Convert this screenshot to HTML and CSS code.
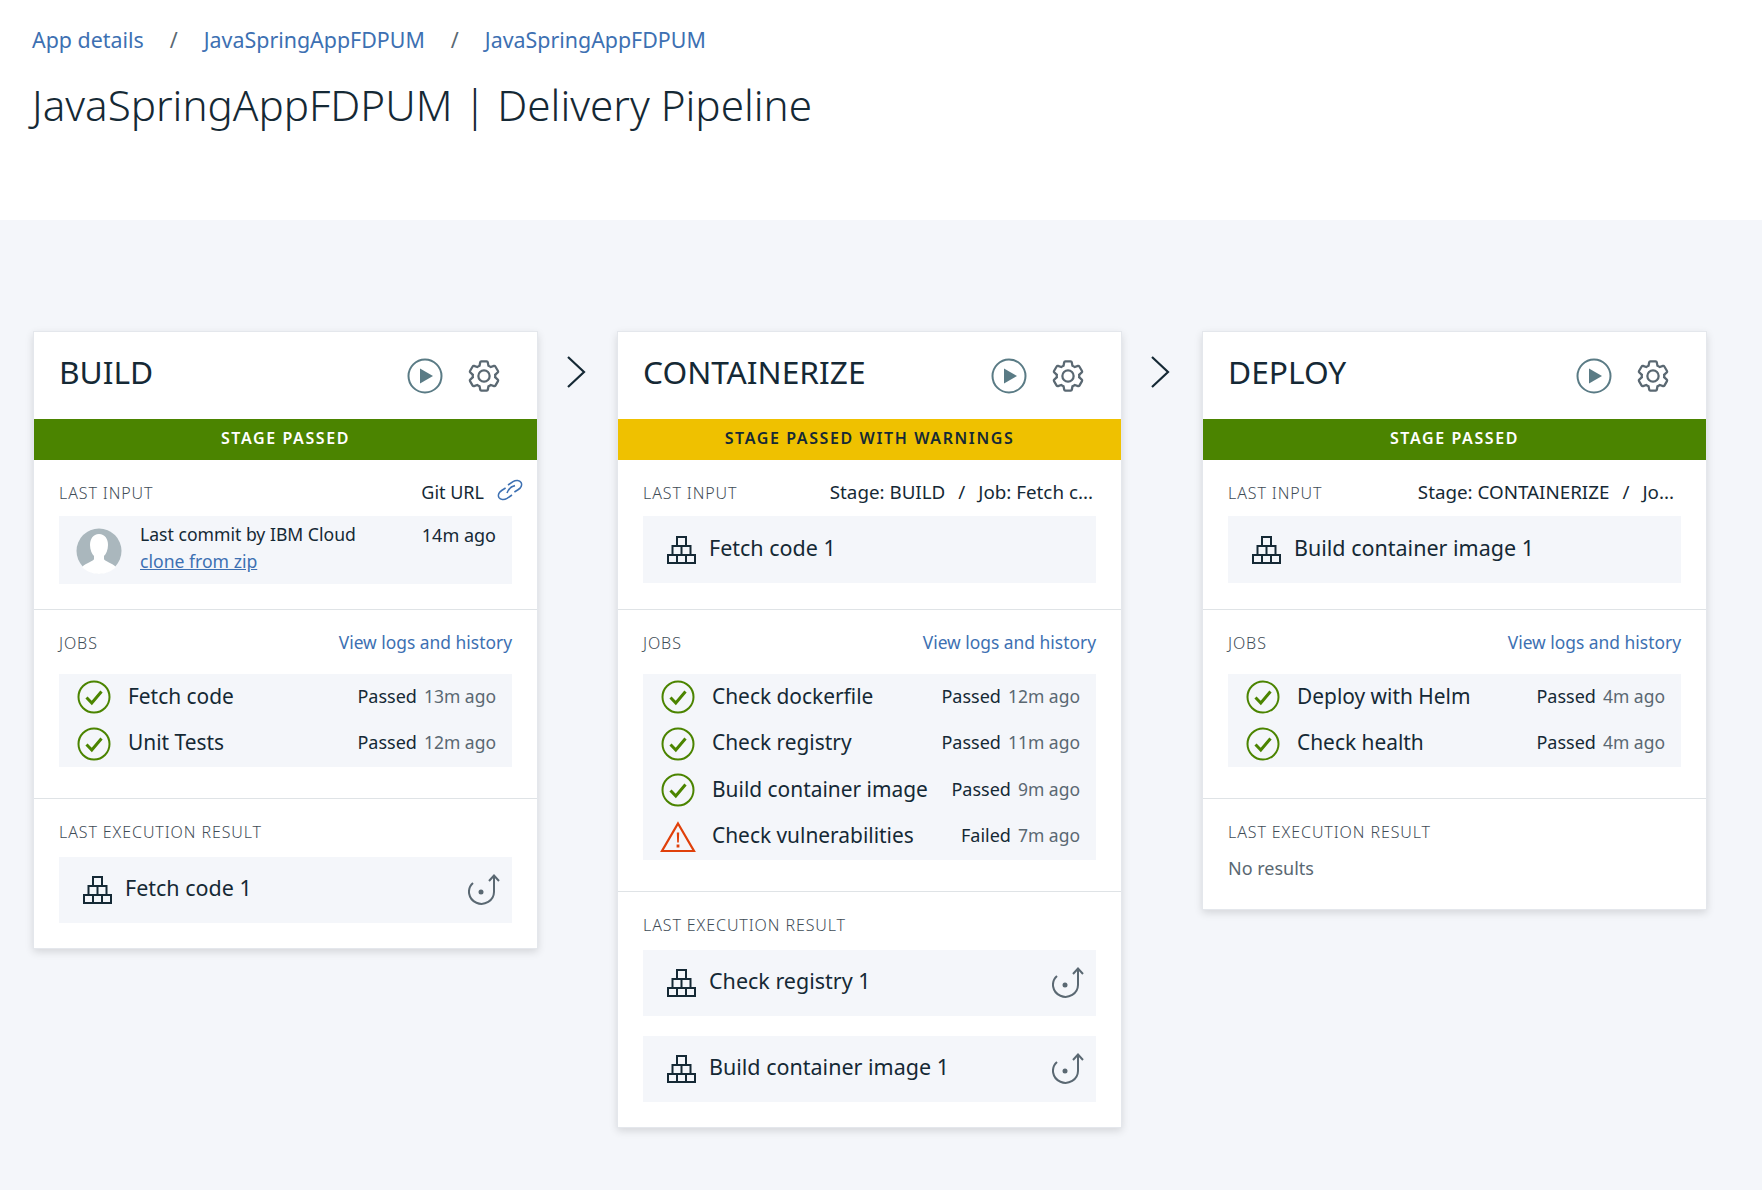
FILE: index.html
```html
<!DOCTYPE html>
<html lang="en">
<head>
    <meta charset="UTF-8">
    <title>JavaSpringAppFDPUM | Delivery Pipeline</title>
    <link rel="stylesheet" href="styles.css">
</head>
<body>

<svg class="defs" width="0" height="0">
    <symbol id="i-play" viewBox="0 0 36 36">
        <circle cx="18" cy="18" r="16.5" fill="none" stroke="#5a7b85" stroke-width="2"/>
        <path d="M13 10.5 L26 18 L13 25.5 Z" fill="#5a7b85"/>
    </symbol>
    <symbol id="i-gear" viewBox="0 0 32 32">
        <path fill="#5a6872" d="M27,16.76c0-.25,0-.5,0-.76s0-.51,0-.77l1.92-1.68A2,2,0,0,0,29.3,11L26.94,7a2,2,0,0,0-1.73-1,2,2,0,0,0-.64.1l-2.43.82a11.35,11.35,0,0,0-1.31-.75l-.51-2.52a2,2,0,0,0-2-1.61H13.64a2,2,0,0,0-2,1.61l-.51,2.52a11.48,11.48,0,0,0-1.32.75L7.43,6.06A2,2,0,0,0,6.79,6,2,2,0,0,0,5.06,7L2.7,11a2,2,0,0,0,.41,2.51L5,15.24c0,.25,0,.5,0,.76s0,.51,0,.77L3.11,18.45A2,2,0,0,0,2.7,21L5.06,25a2,2,0,0,0,1.73,1,2,2,0,0,0,.64-.1l2.43-.82a11.35,11.35,0,0,0,1.31.75l.51,2.52a2,2,0,0,0,2,1.61h4.72a2,2,0,0,0,2-1.61l.51-2.52a11.48,11.48,0,0,0,1.32-.75l2.42.82a2,2,0,0,0,.64.1,2,2,0,0,0,1.73-1L29.3,21a2,2,0,0,0-.41-2.51ZM25.21,24l-3.43-1.16a8.86,8.86,0,0,1-2.71,1.57L18.36,28H13.64l-.71-3.55a9.36,9.36,0,0,1-2.7-1.57L6.79,24,4.43,20l2.72-2.4a8.9,8.9,0,0,1,0-3.13L4.43,12,6.79,8l3.43,1.16a8.86,8.86,0,0,1,2.71-1.57L13.64,4h4.72l.71,3.55a9.36,9.36,0,0,1,2.7,1.57L25.21,8,27.57,12l-2.72,2.4a8.9,8.9,0,0,1,0,3.13L27.57,20Z"/>
        <path fill="#5a6872" d="M16,22a6,6,0,1,1,6-6A5.94,5.94,0,0,1,16,22Zm0-10a3.91,3.91,0,0,0-4,4,3.91,3.91,0,0,0,4,4,3.91,3.91,0,0,0,4-4A3.91,3.91,0,0,0,16,12Z"/>
    </symbol>
    <symbol id="i-chevron" viewBox="0 0 20 34">
        <path d="M2 2 L18 17 L2 32" fill="none" stroke="#152935" stroke-width="2.2"/>
    </symbol>
    <symbol id="i-link" viewBox="0 0 26 22">
        <g fill="none" stroke="#3d70b2" stroke-width="1.6">
            <path d="M11 6 L16 2.6 C19 .8 22.6 1.2 24 3.4 C25.4 5.8 24 9 21 10.8 L17.4 13"/>
            <path d="M15 16 L10 19.4 C7 21.2 3.4 20.8 2 18.6 C.6 16.2 2 13 5 11.2 L8.6 9"/>
            <path d="M10 14 C11.6 9.6 14.4 7.4 18 6.6"/>
        </g>
    </symbol>
    <symbol id="i-check" viewBox="0 0 34 34">
        <circle cx="17" cy="17" r="15.5" fill="none" stroke="#4b8400" stroke-width="2"/>
        <path d="M9.5 17.5 L14.8 23 L24.5 11.5" fill="none" stroke="#4b8400" stroke-width="3"/>
    </symbol>
    <symbol id="i-warn" viewBox="0 0 36 32">
        <path d="M18 2.5 L34 30 H2 Z" fill="none" stroke="#e0400a" stroke-width="2.2"/>
        <path d="M16.8 11.5 h2.4 l-.4 10 h-1.6 Z M16.6 23.5 h2.8 v3 h-2.8 Z" fill="#e0400a"/>
    </symbol>
    <symbol id="i-stack" viewBox="0 0 29 28">
        <path d="M1 19 H28 V27 H1 Z M10 19 V27 M19 19 V27 M5.500 10 H23.500 V19 H5.500 Z M14.500 10 V19 M10 1 H19 V10 H10 Z" fill="none" stroke="#152935" stroke-width="2"/>
    </symbol>
    <symbol id="i-rerun" viewBox="0 0 32 32">
        <g fill="none" stroke="#5a6872" stroke-width="2">
            <path d="M21 7 L26 1.500 L31 7"/>
            <path d="M26 2 V18 A12.500 12 0 1 1 5 9"/>
        </g>
        <circle cx="13" cy="18" r="2.500" fill="#5a6872"/>
    </symbol>
    <symbol id="i-user" viewBox="0 0 46 46">
        <circle cx="23" cy="23" r="22.500" fill="#aab7bd"/>
        <path d="M23 6 C29 6 32 11 32 17 C32 22 30 26 28 28 V31 C28 33 36 35 40 39 C36 43 30 46 23 46 C16 46 10 43 6 39 C10 35 18 33 18 31 V28 C16 26 14 22 14 17 C14 11 17 6 23 6 Z" fill="#fff"/>
    </symbol>
</svg>

<header class="page-header">
    <nav class="crumbs">
        <a href="#">App details</a><span class="sep">/</span>
        <a href="#">JavaSpringAppFDPUM</a><span class="sep">/</span>
        <a href="#">JavaSpringAppFDPUM</a>
    </nav>
    <h1 class="page-title">JavaSpringAppFDPUM | Delivery Pipeline</h1>
</header>

<main class="pipeline">

    <section class="stage">
        <div class="stage-head">
            <h2>BUILD</h2>
            <svg class="ico-play"><use href="#i-play"/></svg>
            <svg class="ico-gear"><use href="#i-gear"/></svg>
        </div>
        <div class="status ok">STAGE PASSED</div>
        <div class="block block-input">
            <div class="block-head">
                <span class="label">LAST INPUT</span>
                <span class="input-val">Git URL<svg class="ico-link"><use href="#i-link"/></svg></span>
            </div>
            <div class="box commit">
                <svg class="ico-user"><use href="#i-user"/></svg>
                <div class="commit-text">
                    <div>Last commit by IBM Cloud</div>
                    <a href="#">clone from zip</a>
                </div>
                <span class="commit-time">14m ago</span>
            </div>
        </div>
        <div class="block block-jobs">
            <div class="block-head">
                <span class="label">JOBS</span>
                <a class="logs" href="#">View logs and history</a>
            </div>
            <div class="box jobs">
                <div class="job"><svg class="ico-job"><use href="#i-check"/></svg><span class="job-name">Fetch code</span><span class="job-state">Passed</span><span class="job-time">13m ago</span></div>
                <div class="job"><svg class="ico-job"><use href="#i-check"/></svg><span class="job-name">Unit Tests</span><span class="job-state">Passed</span><span class="job-time">12m ago</span></div>
            </div>
        </div>
        <div class="block block-result">
            <div class="block-head">
                <span class="label">LAST EXECUTION RESULT</span>
            </div>
            <div class="box result">
                <svg class="ico-stack"><use href="#i-stack"/></svg><span class="result-name">Fetch code 1</span>
                <svg class="ico-rerun"><use href="#i-rerun"/></svg>
            </div>
        </div>
    </section>

    <div class="arrow"><svg class="ico-chevron"><use href="#i-chevron"/></svg></div>

    <section class="stage">
        <div class="stage-head">
            <h2>CONTAINERIZE</h2>
            <svg class="ico-play"><use href="#i-play"/></svg>
            <svg class="ico-gear"><use href="#i-gear"/></svg>
        </div>
        <div class="status warn">STAGE PASSED WITH WARNINGS</div>
        <div class="block block-input">
            <div class="block-head">
                <span class="label">LAST INPUT</span>
                <span class="input-val plain">Stage: BUILD<span class="slash">/</span>Job: Fetch c...</span>
            </div>
            <div class="box result">
                <svg class="ico-stack"><use href="#i-stack"/></svg><span class="result-name">Fetch code 1</span>
            </div>
        </div>
        <div class="block block-jobs">
            <div class="block-head">
                <span class="label">JOBS</span>
                <a class="logs" href="#">View logs and history</a>
            </div>
            <div class="box jobs">
                <div class="job"><svg class="ico-job"><use href="#i-check"/></svg><span class="job-name">Check dockerfile</span><span class="job-state">Passed</span><span class="job-time">12m ago</span></div>
                <div class="job"><svg class="ico-job"><use href="#i-check"/></svg><span class="job-name">Check registry</span><span class="job-state">Passed</span><span class="job-time">11m ago</span></div>
                <div class="job"><svg class="ico-job"><use href="#i-check"/></svg><span class="job-name">Build container image</span><span class="job-state">Passed</span><span class="job-time">9m ago</span></div>
                <div class="job"><svg class="ico-job"><use href="#i-warn"/></svg><span class="job-name">Check vulnerabilities</span><span class="job-state">Failed</span><span class="job-time">7m ago</span></div>
            </div>
        </div>
        <div class="block block-result">
            <div class="block-head">
                <span class="label">LAST EXECUTION RESULT</span>
            </div>
            <div class="box result">
                <svg class="ico-stack"><use href="#i-stack"/></svg><span class="result-name">Check registry 1</span>
                <svg class="ico-rerun"><use href="#i-rerun"/></svg>
            </div>
            <div class="box result">
                <svg class="ico-stack"><use href="#i-stack"/></svg><span class="result-name">Build container image 1</span>
                <svg class="ico-rerun"><use href="#i-rerun"/></svg>
            </div>
        </div>
    </section>

    <div class="arrow arrow-wide"><svg class="ico-chevron"><use href="#i-chevron"/></svg></div>

    <section class="stage">
        <div class="stage-head">
            <h2>DEPLOY</h2>
            <svg class="ico-play"><use href="#i-play"/></svg>
            <svg class="ico-gear"><use href="#i-gear"/></svg>
        </div>
        <div class="status ok">STAGE PASSED</div>
        <div class="block block-input">
            <div class="block-head">
                <span class="label">LAST INPUT</span>
                <span class="input-val plain far">Stage: CONTAINERIZE<span class="slash">/</span>Jo...</span>
            </div>
            <div class="box result">
                <svg class="ico-stack"><use href="#i-stack"/></svg><span class="result-name">Build container image 1</span>
            </div>
        </div>
        <div class="block block-jobs">
            <div class="block-head">
                <span class="label">JOBS</span>
                <a class="logs" href="#">View logs and history</a>
            </div>
            <div class="box jobs">
                <div class="job"><svg class="ico-job"><use href="#i-check"/></svg><span class="job-name">Deploy with Helm</span><span class="job-state">Passed</span><span class="job-time">4m ago</span></div>
                <div class="job"><svg class="ico-job"><use href="#i-check"/></svg><span class="job-name">Check health</span><span class="job-state">Passed</span><span class="job-time">4m ago</span></div>
            </div>
        </div>
        <div class="block block-result no-results">
            <div class="block-head">
                <span class="label">LAST EXECUTION RESULT</span>
            </div>
            <div class="none">No results</div>
        </div>
    </section>

</main>

</body>
</html>
```

FILE: styles.css
```css
* {
    box-sizing: border-box;
}

html, body {
    margin: 0;
    height: 100%;
}

body {
    font-family: "Noto Sans", Arial, sans-serif;
    color: #152935;
    background-color: #f4f6fa;
    display: flex;
    flex-direction: column;
}

a {
    color: #3d70b2;
    text-decoration: none;
}

.defs {
    position: absolute;
}

.page-header {
    height: 220px;
    background-color: #fff;
    padding: 23px 0 0 32px;
}

.crumbs {
    display: flex;
    align-items: center;
    height: 32px;
    font-size: 21.4px;
}

.sep {
    width: 60px;
    text-align: center;
    color: #5a6872;
}

.page-title {
    margin: 20px 0 0 0;
    font-size: 42.2px;
    font-weight: 300;
    line-height: 60px;
}

.pipeline {
    flex: 1;
    display: flex;
    align-items: flex-start;
    padding: 111px 0 0 33px;
}

.stage {
    width: 505px;
    background-color: #fff;
    border: 1px solid #e4e7ec;
    box-shadow: 0 3px 8px rgba(0, 0, 0, 0.13);
}

.arrow {
    width: 79px;
    padding: 24px 0 0 28px;
}

.arrow-wide {
    width: 80px;
}

.ico-chevron {
    display: block;
    width: 20px;
    height: 34px;
}

.stage-head {
    height: 87px;
    display: flex;
    align-items: center;
    padding: 0 35.5px 0 25px;
}

.stage-head h2 {
    flex: 1;
    margin: -8px 0 0;
    font-size: 31.7px;
    font-weight: 400;
}

.ico-play {
    width: 36px;
    height: 36px;
    margin-right: 23px;
}

.ico-gear {
    width: 36px;
    height: 36px;
}

.status {
    height: 41px;
    line-height: 38px;
    text-align: center;
    font-size: 16px;
    font-weight: 600;
    letter-spacing: 1.6px;
}

.status.ok {
    background-color: #4b8400;
    color: #fff;
}

.status.warn {
    background-color: #efc100;
    color: #152935;
}

.block {
    padding: 18px 25px 31px;
    border-bottom: 1px solid #dfe3e6;
}

.block:last-child {
    border-bottom: none;
    padding-bottom: 25px;
}

.block-input {
    padding-bottom: 26px;
}

.block-head {
    height: 28px;
    display: flex;
    align-items: center;
    justify-content: space-between;
}

.block-input .block-head {
    margin-bottom: 10px;
}

.block-jobs .block-head {
    margin-bottom: 18px;
}

.block-result .block-head {
    margin-bottom: 12px;
}

.label {
    margin-top: 2px;
    font-size: 16px;
    font-weight: 300;
    color: #3f4d57;
    letter-spacing: 0.9px;
}

.input-val {
    display: flex;
    align-items: center;
    font-size: 18px;
}

.input-val.plain {
    margin-right: 3px;
    font-size: 18.8px;
}

.input-val.far {
    margin-right: 7px;
}

.slash {
    margin: 0 13px;
}

.ico-link {
    width: 26px;
    height: 22px;
    margin: -5px -11px 0 13px;
}

.logs {
    font-size: 17.4px;
}

.box {
    background-color: #f4f6fa;
}

.commit {
    height: 68px;
    display: flex;
    align-items: center;
    padding: 0 16px 0 17px;
    margin-bottom: -1px;
}

.ico-user {
    width: 46px;
    height: 46px;
    margin-top: 1px;
}

.commit-text {
    flex: 1;
    margin: -4px 0 0 18px;
    font-size: 17.6px;
    line-height: 27px;
}

.commit-text a {
    text-decoration: underline;
}

.commit-time {
    align-self: flex-start;
    margin-top: 6px;
    font-size: 18px;
    line-height: 26px;
}

.job {
    height: 46.5px;
    display: flex;
    align-items: center;
    padding: 0 16px 0 17px;
}

.ico-job {
    width: 36px;
    height: 34px;
}

.job-name {
    flex: 1;
    margin: 0 0 3px 16px;
    font-size: 20.9px;
}

.job-state {
    margin-bottom: 3px;
    font-size: 18px;
}

.job-time {
    margin: 0 0 3px 7px;
    font-size: 17.5px;
    color: #5a6872;
}

.result {
    height: 66px;
    display: flex;
    align-items: center;
    padding: 0 12px 0 24px;
}

.block-input .result {
    height: 67px;
}

.result + .result {
    margin-top: 19.5px;
}

.ico-stack {
    width: 29px;
    height: 28px;
}

.result-name {
    flex: 1;
    margin: 0 0 5px 13px;
    font-size: 21.5px;
}

.ico-rerun {
    width: 32px;
    height: 32px;
}

.none {
    margin-top: -1px;
    padding-bottom: 4px;
    font-size: 18px;
    color: #5a6872;
}
```
